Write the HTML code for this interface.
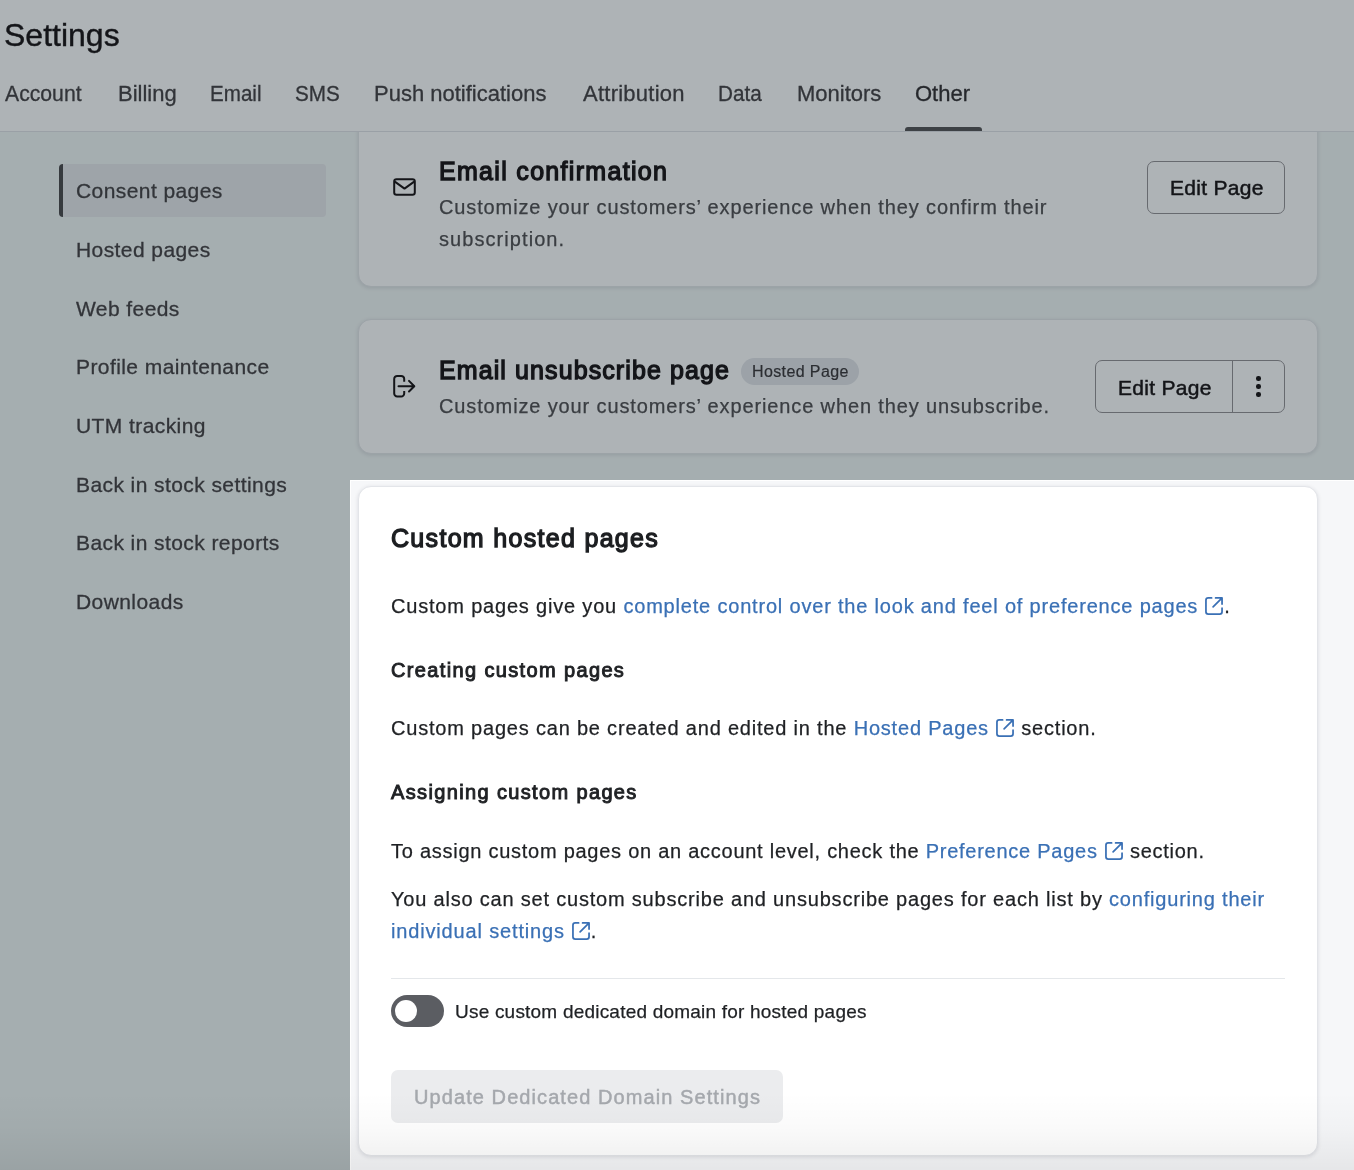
<!DOCTYPE html>
<html><head><meta charset="utf-8">
<style>
*{margin:0;padding:0;box-sizing:border-box}
html,body{width:1354px;height:1170px;overflow:hidden}
body{position:relative;background:#f4f6f7;font-family:"Liberation Sans",sans-serif;color:#1f2124}
.a{position:absolute;white-space:nowrap;line-height:1}
#hdr{position:absolute;left:0;top:0;width:1354px;height:132px;background:#fff;border-bottom:1px solid #e0e2e6;z-index:2}
.tab{font-size:22px;top:83px;color:#413d3f;-webkit-text-stroke:.3px #413d3f}
.side{font-size:21px;color:#413d3f;-webkit-text-stroke:.3px #413d3f;left:76px;letter-spacing:.42px}
.card{position:absolute;left:358px;width:960px;background:#fff;border:1px solid #e3e6e9;border-radius:13px;box-shadow:0 1px 4px rgba(20,20,40,.12)}
.ttl{font-size:25px;color:#130d0e;-webkit-text-stroke:1.3px #130d0e;letter-spacing:1.31px}
.desc{font-size:20px;color:#4d4b4d;-webkit-text-stroke:.25px #4d4b4d;letter-spacing:.87px}
.btn{position:absolute;border:1px solid #939093;border-radius:7px}
.p{font-size:20px;color:#1f2124;-webkit-text-stroke:.25px #1f2124;letter-spacing:.84px}
.lk{color:#3a70b5;-webkit-text-stroke:.25px #3a70b5}
.h3{font-size:20px;color:#1f2124;-webkit-text-stroke:.95px #1f2124;letter-spacing:1.36px}
.ext{display:inline-block;width:18px;height:18px;vertical-align:-2px;margin-left:7px;margin-right:1px}
.ov{position:absolute;z-index:50;background:rgba(22,38,46,.35)}
</style></head><body>
<div id="root" style="position:absolute;left:0;top:0;width:1354px;height:1170px;overflow:hidden;background:#f2f7f6;will-change:transform">

<div id="hdr">
  <div class="a" style="left:4px;top:19px;font-size:32px;color:#130d0e;-webkit-text-stroke:.4px #130d0e">Settings</div>
  <div class="a tab" style="left:5px;transform:scaleX(.963);transform-origin:0 0">Account</div>
  <div class="a tab" style="left:118px">Billing</div>
  <div class="a tab" style="left:210px;transform:scaleX(.936);transform-origin:0 0">Email</div>
  <div class="a tab" style="left:295px;transform:scaleX(.94);transform-origin:0 0">SMS</div>
  <div class="a tab" style="left:374px">Push notifications</div>
  <div class="a tab" style="left:583px;letter-spacing:.25px">Attribution</div>
  <div class="a tab" style="left:718px;transform:scaleX(.94);transform-origin:0 0">Data</div>
  <div class="a tab" style="left:797px">Monitors</div>
  <div class="a tab" style="left:915px;color:#2e2a2c;-webkit-text-stroke:.3px #2e2a2c">Other</div>
  <div style="position:absolute;left:905px;top:127px;width:77px;height:4px;background:#525052;border-radius:3px 3px 0 0"></div>
</div>

<!-- sidebar -->
<div style="position:absolute;left:59px;top:164px;width:267px;height:53px;background:#e6e8eb;border-radius:4px;border-left:4px solid #474547"></div>
<div class="a side" style="top:180px">Consent pages</div>
<div class="a side" style="top:239px">Hosted pages</div>
<div class="a side" style="top:298px">Web feeds</div>
<div class="a side" style="top:356px">Profile maintenance</div>
<div class="a side" style="top:415px">UTM tracking</div>
<div class="a side" style="top:474px">Back in stock settings</div>
<div class="a side" style="top:532px">Back in stock reports</div>
<div class="a side" style="top:591px">Downloads</div>

<!-- card 1 (scrolled under header) -->
<div class="card" style="top:100px;height:187px"></div>
<svg class="a" style="left:392px;top:177px" width="25" height="20" viewBox="0 0 25 20"><rect x="2.2" y="2.2" width="20.6" height="15.6" rx="2.3" fill="none" stroke="#130d0e" stroke-width="2"/><path d="M2.8 4.6 L12.5 11.6 L22.2 4.6" fill="none" stroke="#130d0e" stroke-width="2" stroke-linejoin="round"/></svg>
<div class="a ttl" style="left:439px;top:159px">Email confirmation</div>
<div class="a desc" style="left:439px;top:197px">Customize your customers’ experience when they confirm their</div>
<div class="a desc" style="left:439px;top:229px;letter-spacing:1.07px">subscription.</div>
<div class="btn" style="left:1147px;top:161px;width:138px;height:53px"></div>
<div class="a" style="left:1170px;top:177px;font-size:21px;color:#130d0e;-webkit-text-stroke:.5px #130d0e;letter-spacing:.3px">Edit Page</div>

<!-- card 2 -->
<div class="card" style="top:319px;height:135px"></div>
<svg class="a" style="left:391px;top:373px" width="27" height="27" viewBox="0 0 27 27"><path d="M13.2 8.8 V5.9 A3 3 0 0 0 10.2 2.9 H6.2 A3 3 0 0 0 3.2 5.9 V20.5 A3 3 0 0 0 6.2 23.5 H10.2 A3 3 0 0 0 13.2 20.5 V18" fill="none" stroke="#130d0e" stroke-width="2"/><path d="M7.5 13.2 H23 M18 7.9 L23.3 13.2 L18 18.5" fill="none" stroke="#130d0e" stroke-width="2" stroke-linecap="round" stroke-linejoin="round"/></svg>
<div class="a ttl" style="left:439px;top:358px;letter-spacing:1.1px">Email unsubscribe page</div>
<div style="position:absolute;left:741px;top:358px;width:118px;height:27px;border-radius:14px;background:#e3e5ea"></div>
<div class="a" style="left:752px;top:364px;font-size:16px;color:#363234;-webkit-text-stroke:.2px #363234;letter-spacing:.39px">Hosted Page</div>
<div class="a desc" style="left:439px;top:396px">Customize your customers’ experience when they unsubscribe.</div>
<div class="btn" style="left:1095px;top:360px;width:190px;height:53px"></div>
<div style="position:absolute;left:1232px;top:361px;width:1px;height:51px;background:#939093"></div>
<div class="a" style="left:1118px;top:377px;font-size:21px;color:#130d0e;-webkit-text-stroke:.5px #130d0e;letter-spacing:.3px">Edit Page</div>
<div style="position:absolute;left:1256px;top:376px;width:4.5px;height:4.5px;border-radius:50%;background:#130d0e"></div>
<div style="position:absolute;left:1256px;top:384px;width:4.5px;height:4.5px;border-radius:50%;background:#130d0e"></div>
<div style="position:absolute;left:1256px;top:392px;width:4.5px;height:4.5px;border-radius:50%;background:#130d0e"></div>

<!-- overlay -->
<div class="ov" style="left:0;top:0;width:1354px;height:480px"></div>
<div class="ov" style="left:0;top:480px;width:350px;height:690px"></div>

<!-- spotlight -->
<div style="position:absolute;left:350px;top:480px;width:1004px;height:690px;background:#f6f7f9;border-top:1px solid #fff;border-left:1px solid #fff;z-index:40"></div>

<div style="position:absolute;left:0;top:0;width:1354px;height:1170px;z-index:60">
<div class="card" style="top:486px;height:670px;border-color:#e3e5e9"></div>
<div class="a ttl" style="left:391px;top:526px;color:#1c1e21;-webkit-text-stroke:1.3px #1c1e21">Custom hosted pages</div>
<div class="a p" style="left:391px;top:596px;letter-spacing:.81px">Custom pages give you <span class="lk">complete control over the look and feel of preference pages<svg class="ext" viewBox="0 0 18 18"><path d="M6.6 0.95 H3.3 A2.35 2.35 0 0 0 0.95 3.3 V14.7 A2.35 2.35 0 0 0 3.3 17.05 H14.7 A2.35 2.35 0 0 0 17.05 14.7 V11.2 M10.6 0.95 H17.05 V7.1 M16.6 1.4 L8.1 9.9" fill="none" stroke="#3a70b5" stroke-width="1.75" stroke-linecap="round" stroke-linejoin="round"/></svg></span>.</div>
<div class="a h3" style="left:391px;top:660px">Creating custom pages</div>
<div class="a p" style="left:391px;top:718px;letter-spacing:.8px">Custom pages can be created and edited in the <span class="lk">Hosted Pages<svg class="ext" viewBox="0 0 18 18"><path d="M6.6 0.95 H3.3 A2.35 2.35 0 0 0 0.95 3.3 V14.7 A2.35 2.35 0 0 0 3.3 17.05 H14.7 A2.35 2.35 0 0 0 17.05 14.7 V11.2 M10.6 0.95 H17.05 V7.1 M16.6 1.4 L8.1 9.9" fill="none" stroke="#3a70b5" stroke-width="1.75" stroke-linecap="round" stroke-linejoin="round"/></svg></span> section.</div>
<div class="a h3" style="left:391px;top:782px">Assigning custom pages</div>
<div class="a p" style="left:391px;top:841px;letter-spacing:.74px">To assign custom pages on an account level, check the <span class="lk">Preference Pages<svg class="ext" viewBox="0 0 18 18"><path d="M6.6 0.95 H3.3 A2.35 2.35 0 0 0 0.95 3.3 V14.7 A2.35 2.35 0 0 0 3.3 17.05 H14.7 A2.35 2.35 0 0 0 17.05 14.7 V11.2 M10.6 0.95 H17.05 V7.1 M16.6 1.4 L8.1 9.9" fill="none" stroke="#3a70b5" stroke-width="1.75" stroke-linecap="round" stroke-linejoin="round"/></svg></span> section.</div>
<div class="a p" style="left:391px;top:889px;letter-spacing:.8px">You also can set custom subscribe and unsubscribe pages for each list by <span class="lk">configuring their</span></div>
<div class="a p" style="left:391px;top:921px"><span class="lk">individual settings<svg class="ext" viewBox="0 0 18 18"><path d="M6.6 0.95 H3.3 A2.35 2.35 0 0 0 0.95 3.3 V14.7 A2.35 2.35 0 0 0 3.3 17.05 H14.7 A2.35 2.35 0 0 0 17.05 14.7 V11.2 M10.6 0.95 H17.05 V7.1 M16.6 1.4 L8.1 9.9" fill="none" stroke="#3a70b5" stroke-width="1.75" stroke-linecap="round" stroke-linejoin="round"/></svg></span>.</div>
<div style="position:absolute;left:391px;top:978px;width:894px;height:1px;background:#e4e7ea"></div>
<div style="position:absolute;left:391px;top:995px;width:53px;height:32px;border-radius:16px;background:#5b5d62"></div>
<div style="position:absolute;left:395px;top:1000px;width:22px;height:22px;border-radius:11px;background:#fff"></div>
<div class="a" style="left:455px;top:1002px;font-size:19px;color:#1f2124;-webkit-text-stroke:.25px #1f2124;letter-spacing:.21px">Use custom dedicated domain for hosted pages</div>
<div style="position:absolute;left:391px;top:1070px;width:392px;height:53px;border-radius:7px;background:#ebecee"></div>
<div class="a" style="left:414px;top:1087px;font-size:20px;color:#a5a8ad;-webkit-text-stroke:.45px #a5a8ad;letter-spacing:1.08px">Update Dedicated Domain Settings</div>
</div>

<!-- bottom fade -->
<div style="position:absolute;left:0;top:1092px;width:1354px;height:78px;z-index:80;background:linear-gradient(to bottom,rgba(0,0,0,0) 0%,rgba(0,0,0,.018) 45%,rgba(0,0,0,.068) 100%)"></div>
</div>
</body></html>
